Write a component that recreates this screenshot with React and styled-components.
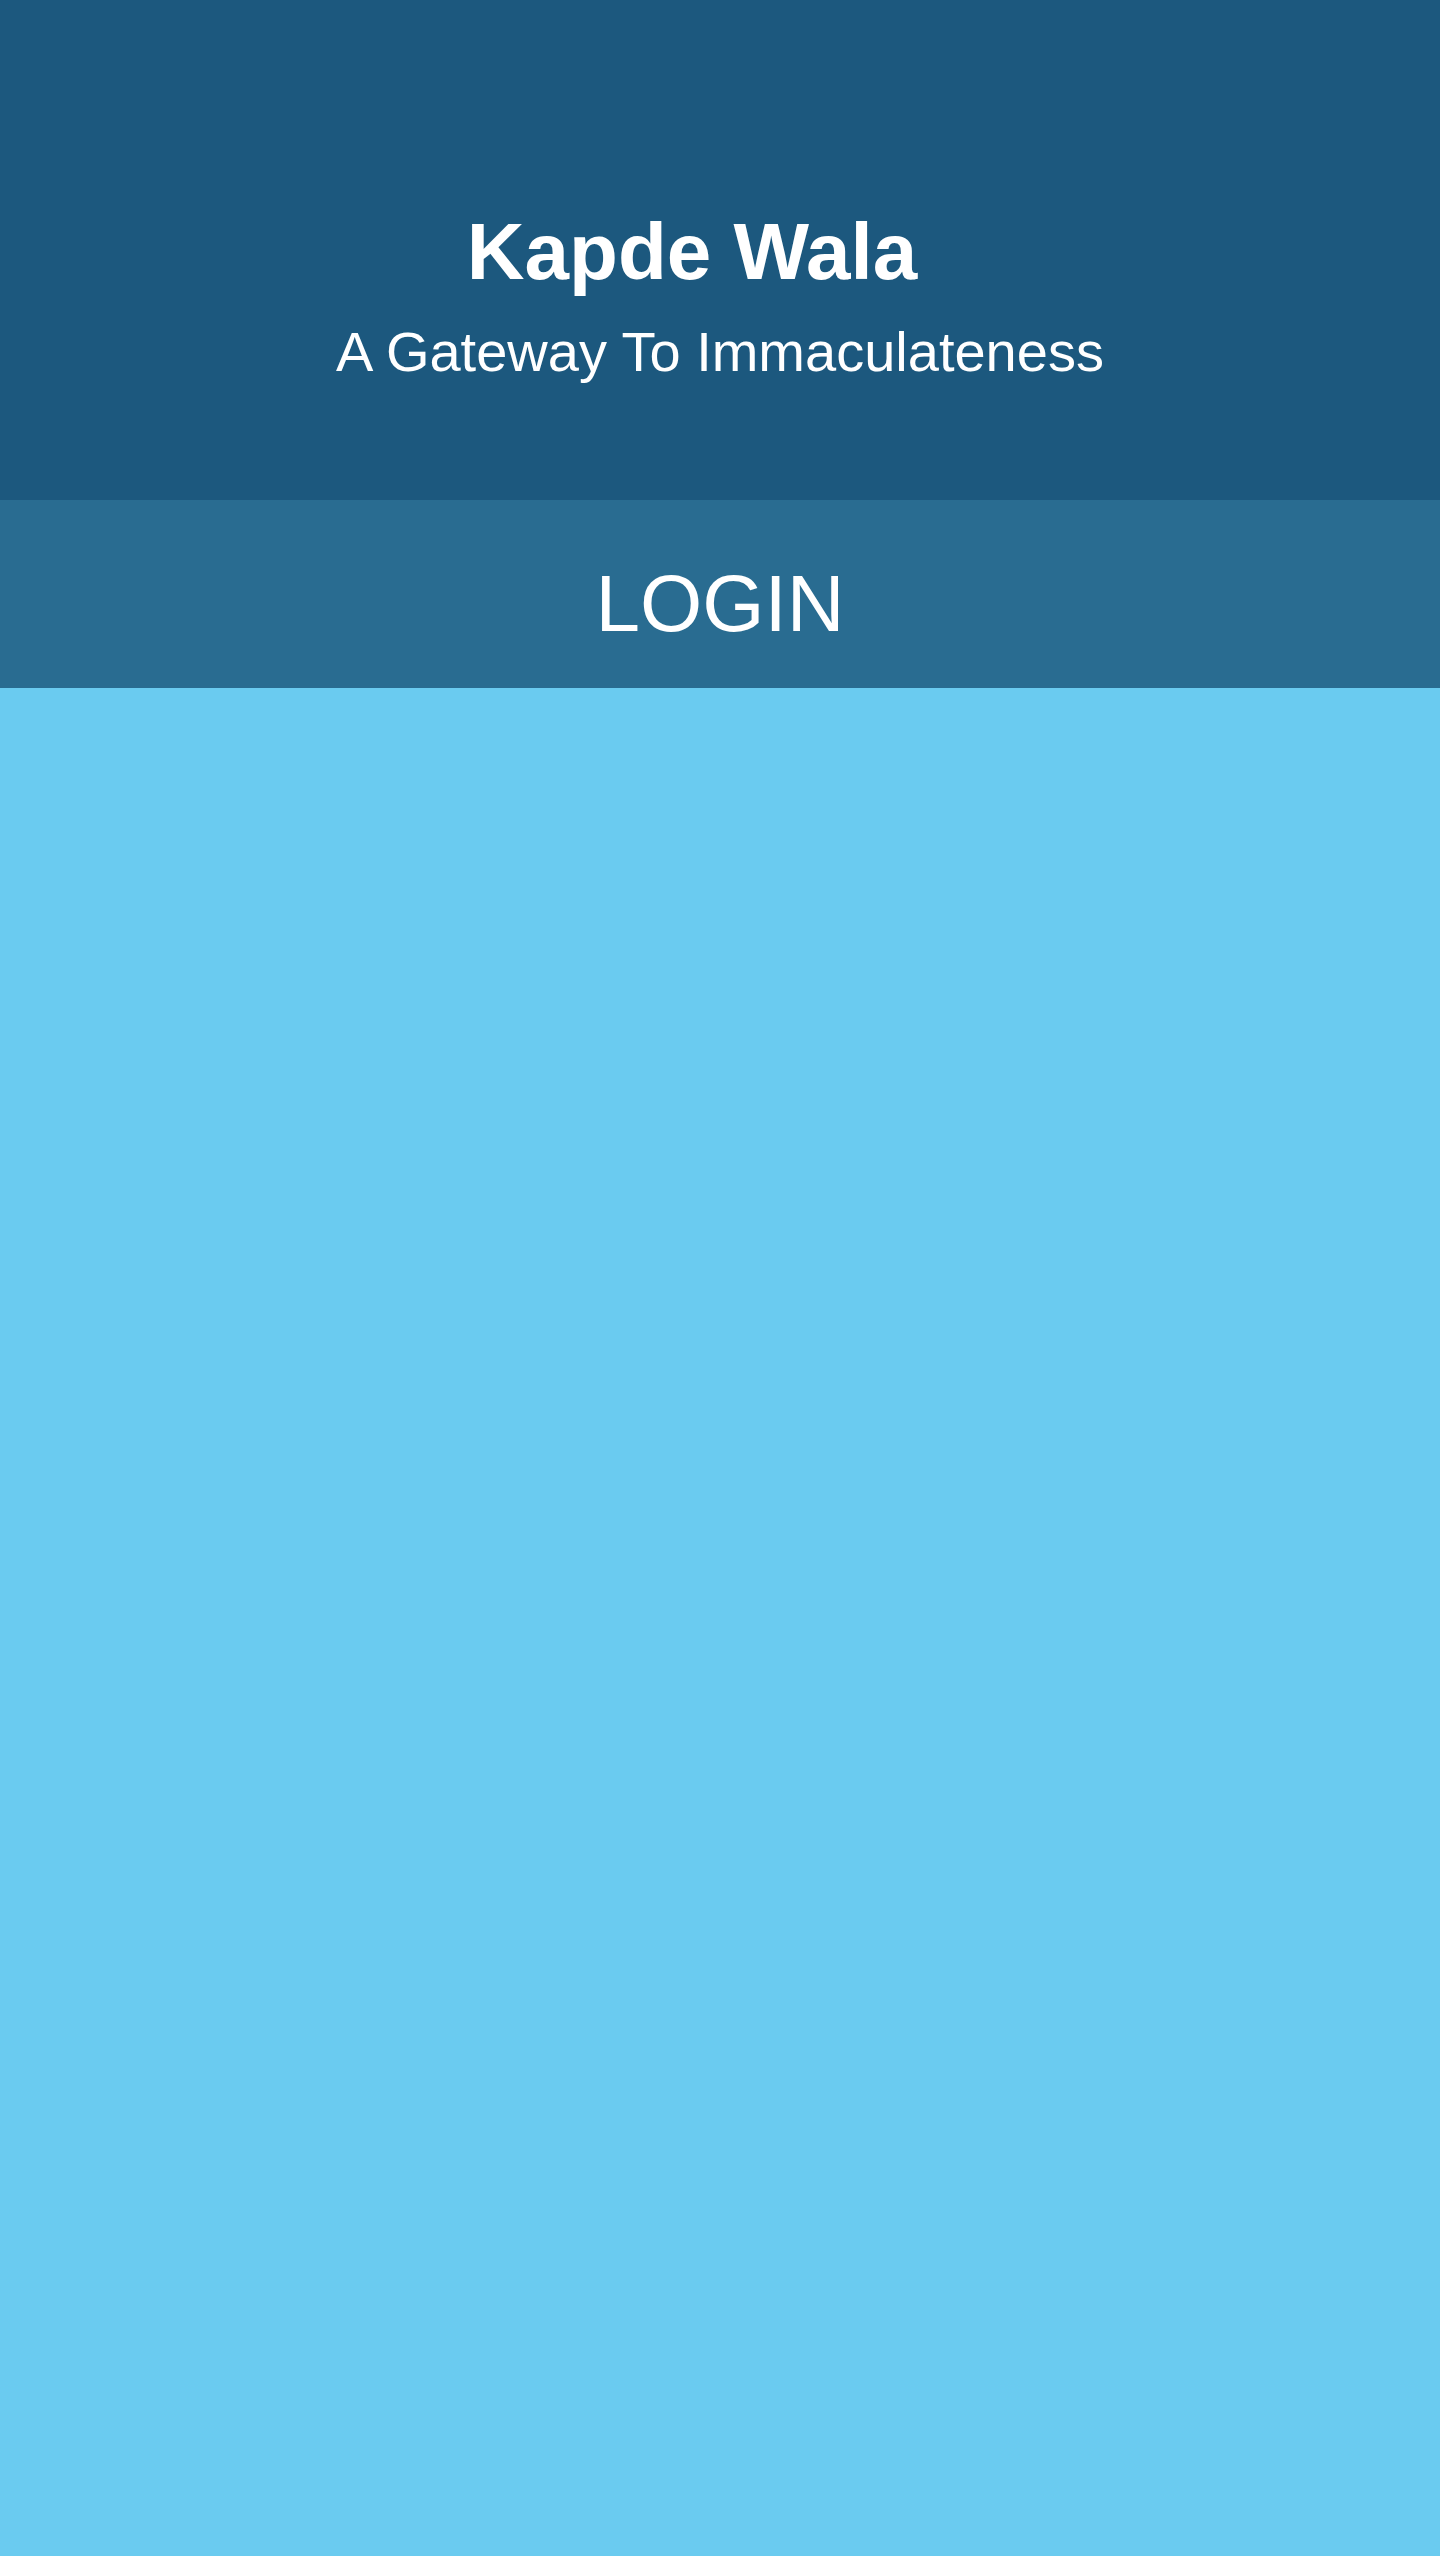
import React from 'react';
import styled, { createGlobalStyle } from 'styled-components';

const GlobalStyle = createGlobalStyle`
  html, body {
    margin: 0;
    padding: 0;
    background: #6acbf0;
    font-family: "Liberation Sans", Arial, sans-serif;
  }
`;

const Page = styled.div`
  display: flex;
  flex-direction: column;
  min-height: 2556px;
  background: #6acbf0;
`;

const Header = styled.header`
  display: flex;
  flex-direction: column;
  align-items: center;
  height: 500px;
  box-sizing: border-box;
  padding-top: 206px;
  background: #1c587e;
  color: #fff;
`;

const Title = styled.h1`
  margin: 0;
  padding-right: 56px;
  font-size: 80px;
  line-height: 92px;
  font-weight: 700;
`;

const Tagline = styled.p`
  margin: 22px 0 0;
  font-size: 56px;
  line-height: 64px;
`;

const LoginBar = styled.div`
  height: 188px;
  box-sizing: border-box;
  padding-top: 58px;
  background: #296c91;
  color: #fff;
  text-align: center;
  font-size: 80px;
  line-height: 92px;
`;

const Main = styled.main`
  flex: 1;
  background: #6acbf0;
`;

export default function App() {
  return (
    <Page>
      <GlobalStyle />
      <Header>
        <Title>Kapde Wala</Title>
        <Tagline>A Gateway To Immaculateness</Tagline>
      </Header>
      <LoginBar>LOGIN</LoginBar>
      <Main />
    </Page>
  );
}
